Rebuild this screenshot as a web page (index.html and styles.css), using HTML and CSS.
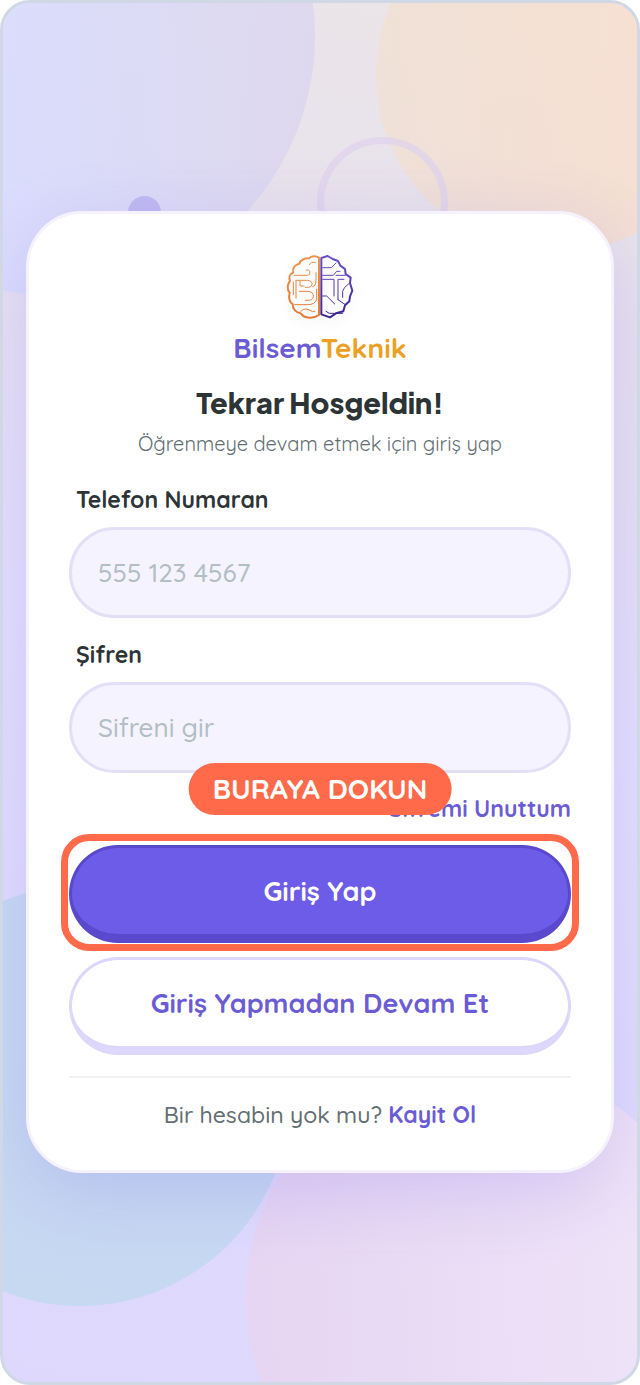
FILE: index.html
```html
<!DOCTYPE html>
<html lang="tr">
<head>
<meta charset="utf-8">
<meta name="viewport" content="width=device-width, initial-scale=1">
<title>BilsemTeknik</title>
<link rel="stylesheet" href="styles.css">
</head>
<body>
<div class="screen">
  <div class="backdrop" aria-hidden="true">
    <span class="shape shape-violet"></span>
    <span class="shape shape-orange"></span>
    <span class="shape shape-teal"></span>
    <span class="shape shape-pink"></span>
    <span class="shape shape-ring"></span>
    <span class="shape shape-dot"></span>
  </div>
  <main class="card">
    <svg class="logo" viewBox="12 12 216 204" fill="none" stroke-linecap="round" stroke-linejoin="round" aria-hidden="true">
      <defs>
        <linearGradient id="warm" x1="0" y1="0" x2="0" y2="1"><stop offset="0" stop-color="#e9954f"/><stop offset="1" stop-color="#e57a35"/></linearGradient>
        <linearGradient id="cool" x1="0" y1="0" x2="0" y2="1"><stop offset="0" stop-color="#6b50c8"/><stop offset="1" stop-color="#3d258f"/></linearGradient>
      </defs>
      <g stroke="url(#warm)">
        <path stroke-width="6" d="M117 23C108 17 94 17 87 25C74 24 61 30 58 41C45 44 37 54 40 67C28 73 26 84 30 93C21 103 21 119 29 128C25 144 29 156 38 162C37 178 49 188 62 190C73 207 102 206 117 195Z"/>
        <path stroke-width="3" d="M43 76H82Q92 76 90 64Q88 58 78 60M108 68V92Q108 108 98 110M106 38Q92 34 88 44M48 91V144M48 91H82Q98 92 96 104Q94 112 84 112H76M60 92V108H72M58 124H84Q102 126 100 140Q98 152 82 151H76M44 164H82Q106 164 110 148V118M62 184Q74 172 88 180Q98 188 104 184M40 96V134"/>
      </g>
      <g stroke="url(#cool)">
        <path stroke-width="6" d="M124 24L143 18L158 27L174 33L181 47L195 57L197 72L212 83L210 99L217 122L210 139L208 154L195 166L190 184L168 190L150 202L124 193Z"/>
        <path stroke-width="3" d="M128 53H154L168 39M128 76H160L170 64L180 64M128 88H162V138M174 149V88H192M128 138H140L164 162M208 100L194 112L188 124V142M174 149L196 164M138 184L148 190H188M168 76H196"/>
      </g>
    </svg>
    <p class="brand"><span class="brand-first">Bilsem</span><span class="brand-second">Teknik</span></p>
    <h1 class="title">Tekrar Hosgeldin!</h1>
    <p class="subtitle">Öğrenmeye devam etmek için giriş yap</p>
    <form class="form">
      <div class="field">
        <label class="label" for="phone">Telefon Numaran</label>
        <input class="input" id="phone" type="tel" placeholder="555 123 4567">
      </div>
      <div class="field">
        <label class="label" for="password">Şifren</label>
        <input class="input" id="password" type="password" placeholder="Sifreni gir">
      </div>
      <a class="forgot" href="#">Sifremi Unuttum</a>
      <div class="actions">
        <div class="spotlight">
          <button class="button button-primary" type="submit">Giriş Yap</button>
          <span class="spotlight-frame"></span>
          <span class="spotlight-tag">BURAYA DOKUN</span>
        </div>
        <button class="button button-secondary" type="button">Giriş Yapmadan Devam Et</button>
      </div>
    </form>
    <p class="signup">Bir hesabin yok mu? <a class="signup-link" href="#">Kayit Ol</a></p>
  </main>
</div>
</body>
</html>
```
FILE: styles.css
```css
* { box-sizing: border-box; }

body {
  margin: 0;
  background: #fff;
  color: #2d3436;
  font-family: Quicksand, Lato, "Open Sans", sans-serif;
  font-weight: 500;
}

p, h1 { margin: 0; }
a { text-decoration: none; }

.screen {
  position: relative;
  display: flex;
  flex-direction: column;
  justify-content: center;
  min-height: 100vh;
  padding: 24px 23px 26px;
  border: 3px solid #cfd8e4;
  border-radius: 30px;
  overflow: hidden;
  background: linear-gradient(195deg, #ece6e8 0%, #e8e2ec 18%, #e4e0fe 50%, #ddd8fc 100%);
}

.backdrop { position: absolute; inset: 0; }

.shape { position: absolute; border-radius: 50%; }
.shape-violet { left: -208px; top: -227px; width: 520px; height: 520px; background: linear-gradient(90deg, #d8dcff 40%, #dcd6ee 100%); opacity: .85; }
.shape-orange { right: -95px; top: -106px; width: 356px; height: 356px; background: linear-gradient(90deg, #f3dfcc, #fddcc2 75%); opacity: .6; }
.shape-teal { left: -133px; bottom: 76px; width: 420px; height: 420px; background: #bcd9ec; opacity: .7; }
.shape-pink { right: -79px; bottom: -151px; width: 470px; height: 470px; background: linear-gradient(90deg, #e8d4f0, #f2e4f6 80%); opacity: .8; }
.shape-ring { left: 314px; top: 134px; width: 131px; height: 131px; border: 7px solid #dfd3ec; opacity: .75; }
.shape-dot { left: 125px; top: 193px; width: 33px; height: 33px; background: #c0baf1; }

.card {
  position: relative;
  display: flex;
  flex-direction: column;
  align-items: center;
  padding: 40px;
  border: 3px solid #f5f2fe;
  border-radius: 56px;
  background: #fff;
  box-shadow: 0 20px 72px rgba(108, 92, 231, .2);
}

.logo {
  width: 72px;
  height: 68px;
  filter: drop-shadow(0 4px 6px rgba(0, 0, 0, .08));
}

.brand { margin-top: 8px; font-size: 28px; line-height: 36px; font-weight: 700; }
.brand-first { color: #6c5cd4; }
.brand-second { color: #eba024; }

.title {
  margin-top: 16px;
  font-family: "Plus Jakarta Sans", Inter, sans-serif;
  font-size: 29px;
  line-height: 40px;
  font-weight: 800;
}

.subtitle { margin-top: 8px; color: #636e72; font-size: 20px; line-height: 28px; font-weight: 400; }

.form { display: flex; flex-direction: column; gap: 23px; width: 100%; margin-top: 28px; }
.field { display: flex; flex-direction: column; gap: 13px; }
.label { padding-left: 7px; font-size: 23px; line-height: 28px; font-weight: 700; }

.input {
  width: 100%;
  height: 91px;
  padding: 0 26px;
  border: 3px solid #e4dff7;
  border-radius: 46px;
  background: #f5f3ff;
  color: #2d3436;
  font: inherit;
  font-size: 26px;
}
.input::placeholder { color: #b2bec3; opacity: 1; }

.forgot { align-self: flex-end; color: #6c5cd4; font-size: 23px; line-height: 26px; font-weight: 700; }

.actions { display: flex; flex-direction: column; gap: 14px; }
.spotlight { position: relative; }

.button {
  display: block;
  width: 100%;
  height: 98px;
  padding: 0 24px;
  border: 3px solid;
  border-bottom-width: 9px;
  border-radius: 49px;
  font: inherit;
  font-size: 27px;
  font-weight: 700;
}
.button-primary { border-color: #5a49cc; background: #6c5ce7; color: #fff; }
.button-secondary { border-color: #dcd7fb; background: #fff; color: #6c5cd4; }

.spotlight-frame {
  position: absolute;
  inset: -11px -8px -8px;
  border: 7px solid #ff6b4a;
  border-radius: 28px;
  pointer-events: none;
}

.spotlight-tag {
  position: absolute;
  left: 50%;
  bottom: calc(100% + 30px);
  transform: translateX(-50%);
  padding: 0 24px;
  border-radius: 26px;
  background: #ff6b4a;
  color: #fff;
  font-size: 28px;
  line-height: 52px;
  font-weight: 700;
  white-space: nowrap;
}

.signup {
  width: 100%;
  margin-top: 21px;
  padding-top: 22px;
  border-top: 2px solid #f1f2f6;
  color: #636e72;
  font-size: 23px;
  line-height: 30px;
  text-align: center;
}
.signup-link { color: #6c5cd4; font-weight: 700; }
```
